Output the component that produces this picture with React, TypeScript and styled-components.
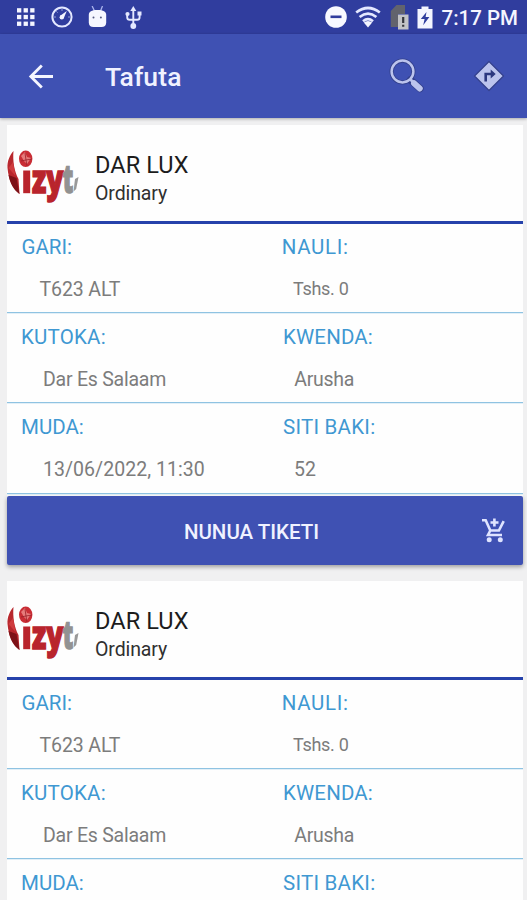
import React from "react";
import styled, { createGlobalStyle } from "styled-components";

const GlobalStyle = createGlobalStyle`
  * { box-sizing: border-box; }
  body { margin: 0; background: #f0f0f1; font-family: Roboto, sans-serif; overflow: hidden; }
  svg { display: block; flex: none; }
`;

const Screen = styled.div`
  width: 527px;
  height: 900px;
  overflow: hidden;
  background: #f0f0f1;
`;

const StatusBar = styled.header`
  height: 34px;
  display: flex;
  align-items: center;
  justify-content: space-between;
  padding: 0 9px 0 16px;
  background: #303d9e;
`;

const StatusGroup = styled.div<{ $gap: number }>`
  display: flex;
  align-items: center;
  gap: ${(p) => p.$gap}px;
`;

const Clock = styled.span`
  color: #f4f5ff;
  font-size: 20.5px;
  font-weight: 500;
  line-height: 26px;
  white-space: nowrap;
  padding-top: 2px;
`;

const AppBar = styled.nav`
  height: 84px;
  display: flex;
  align-items: center;
  padding: 0 22px 0 27px;
  background: #3f51b3;
  box-shadow: 0 1px 3px rgba(0, 0, 0, 0.3);
`;

const Title = styled.h1`
  margin: 2px auto 0 51px;
  color: #f0f2ff;
  font-size: 26.5px;
  font-weight: 500;
  line-height: 32px;
  letter-spacing: 0.1px;
`;

const IconButton = styled.button<{ $gap?: number }>`
  padding: 0;
  border: 0;
  background: none;
  margin-left: ${(p) => p.$gap ?? 0}px;
`;

const List = styled.main`
  display: flex;
  flex-direction: column;
  gap: 16px;
  padding: 7px 4px 0 7px;
`;

const Card = styled.article`
  height: 440px;
  background: #fefefe;
`;

const CardHeader = styled.div`
  height: 99px;
  display: flex;
  align-items: flex-start;
  padding-top: 22px;
  border-bottom: 3px solid #2642ab;
`;

const Heading = styled.div`
  margin: 3px 0 0 16px;
`;

const Company = styled.div`
  color: #1c1c1c;
  font-size: 23.5px;
  line-height: 30px;
  letter-spacing: 0.1px;
`;

const ServiceClass = styled.div`
  color: #303030;
  font-size: 19.5px;
  line-height: 28px;
  letter-spacing: -0.1px;
`;

const Row = styled.div<{ $height: number; $top: number }>`
  height: ${(p) => p.$height}px;
  padding-top: ${(p) => p.$top}px;
  display: grid;
  grid-template-columns: 260px 1fr;
  align-items: start;
  border-bottom: 1px solid #8fc3e2;
  box-shadow: 0 1px 0 #e2eff7;
`;

const Label = styled.div<{ $left: number; $spacing: number }>`
  padding-left: ${(p) => p.$left}px;
  color: #3f98d2;
  font-size: 20.5px;
  line-height: 24px;
  letter-spacing: ${(p) => p.$spacing}px;
`;

const Value = styled.div<{ $left: number; $spacing: number; $size?: number }>`
  margin-top: ${(p) => (p.$size ? 18 : 19)}px;
  padding-left: ${(p) => p.$left}px;
  color: #7c7c7c;
  font-size: ${(p) => p.$size ?? 19.5}px;
  line-height: 24px;
  letter-spacing: ${(p) => p.$spacing}px;
`;

const BuyButton = styled.button`
  width: 100%;
  height: 69px;
  margin-top: 2px;
  padding: 0 18px 0 40px;
  display: flex;
  align-items: center;
  border: 0;
  border-radius: 2px;
  background: #3f51b3;
  color: #f0f2ff;
  font: 500 20.5px Roboto, sans-serif;
  box-shadow: 0 2px 4px rgba(0, 0, 0, 0.35);
`;

const BuyText = styled.span`
  flex: 1;
  text-align: center;
  padding-top: 2px;
  padding-right: 26px;
`;

const GridIcon = () => (
  <svg width="19" height="18" viewBox="0 0 19 18" fill="#f4f5ff">
    {[0, 6.7, 13.4].map((y) => [1, 7.6, 14.2].map((x) => <rect key={`${x}-${y}`} x={x} y={y + 0.2} width="4.3" height="4.3" />))}
  </svg>
);

const GaugeIcon = () => (
  <svg width="22" height="22" viewBox="0 0 22 22" fill="none" stroke="#e4e8ff">
    <circle cx="11" cy="11" r="9.6" strokeWidth="2" />
    <path d="M9.2 9.8 15.8 5 12.6 12.4Z" fill="#f4f5ff" stroke="none" />
    <circle cx="10.8" cy="11.3" r="2.2" fill="#f4f5ff" stroke="none" />
    <path d="M11 3.2v1.6M3.2 11h1.6M17.2 11h1.6M5.5 5.5l1 1" strokeWidth="0.7" />
  </svg>
);

const RobotIcon = () => (
  <svg width="19" height="22" viewBox="0 0 18 22">
    <path d="M3.6 0 6 5M14 0 12 5" stroke="#aab4ec" strokeWidth="1.3" />
    <path d="M.3 9C.3 5.5 3 4 9 4s8.7 1.5 8.7 5v7.5c0 3-1.8 4.500-4.700 4.500H5C2.100 21 .3 19.500.3 16.500Z" fill="#f6f7ff" />
    <circle cx="5" cy="11.5" r="1" fill="#555b82" />
    <circle cx="12.4" cy="11.5" r="1" fill="#555b82" />
  </svg>
);

const UsbIcon = () => (
  <svg width="20" height="23" viewBox="-2 0 20 23" fill="#e4e8ff">
    <path d="M8.3 4v15M2.200 8v3.200q0 2.600 2.500 2.600h7.500q2.400 0 2.400-2.600V8" fill="none" stroke="#e4e8ff" strokeWidth="1.9" />
    <path d="M8.3 0 11.3 5H5.3Z" />
    <circle cx="2.5" cy="8" r="2.1" />
    <rect x="12.5" y="5.5" width="4" height="4" />
    <circle cx="8.3" cy="20" r="2.9" />
  </svg>
);

const DoNotDisturbIcon = () => (
  <svg width="22" height="22" viewBox="0 0 22 22">
    <circle cx="11" cy="11" r="10.8" fill="#f8f9ff" />
    <rect x="5.5" y="9.5" width="11" height="2.6" fill="#303d9e" />
  </svg>
);

const WifiIcon = () => (
  <svg width="26" height="22" viewBox="0 0 26 22" fill="none" stroke="#e4e8ff" strokeWidth="2.7">
    <path d="M1.2 6.5q11.8-9 23.6 0M4.6 11q8.4-6.600 16.800 0M8 15.200q5-4 10 0" />
    <path d="M13 21.5 8.8 16.5q4.200-3.200 8.400 0Z" fill="#f4f5ff" stroke="none" />
  </svg>
);

const SimIcon = () => (
  <svg width="19" height="26" viewBox="0 0 19 26">
    <path d="M.8 7 6.5 1H15v9H8v13H.8Z" fill="#62636d" />
    <rect x="8" y="10.5" width="10.5" height="15" fill="#c3c3c6" />
    <path d="M13.2 13v6M13.2 20.8v2" stroke="#35363c" strokeWidth="2.2" />
  </svg>
);

const BatteryIcon = () => (
  <svg width="16" height="23" viewBox="0 0 16 23">
    <path d="M4.5.5h7V3h4v19.5H.5V3h4Z" fill="#f4f5ff" />
    <path d="M9.5 6 3.8 13h3.800l-1.400 6.200L12.400 11H8.600Z" fill="#303d9e" />
  </svg>
);

const BackIcon = () => (
  <svg width="27" height="25" viewBox="0 0 27 25" fill="none" stroke="#f4f5ff" strokeWidth="2.8">
    <path d="M26 12.5H4M14.8 1.5l-11 11 11 11" />
  </svg>
);

const SearchIcon = () => (
  <svg width="36" height="36" viewBox="0 0 36 36" fill="none">
    <circle cx="13.5" cy="13.5" r="10.9" stroke="#33408c" strokeWidth="4.2" />
    <path d="m21.5 22 9.5 8.5" stroke="#33408c" strokeWidth="7.4" strokeLinecap="round" />
    <circle cx="13.5" cy="13.5" r="10.9" stroke="#bcc4ed" strokeWidth="2.5" />
    <path d="m21 21 3 3" stroke="#bcc4ed" strokeWidth="2.8" />
    <path d="m25 25.2 5.8 5.3" stroke="#bcc4ed" strokeWidth="5.9" strokeLinecap="round" />
  </svg>
);

const DirectionsIcon = () => (
  <svg width="32" height="32" viewBox="0 0 32 32">
    <path d="M16 1.5 30.5 16 16 30.5 1.5 16Z" fill="#bcc4ed" stroke="#33408c" strokeWidth="1.2" strokeLinejoin="round" />
    <path d="M12.7 21.5v-7.500h6" fill="none" stroke="#2c387f" strokeWidth="2.6" />
    <path d="m17.7 9.6 5 4.400-5 4.400Z" fill="#2c387f" />
  </svg>
);

const CartIcon = () => (
  <svg width="23" height="25" viewBox="0 0 23 25" fill="none" stroke="#dfe4ff">
    <path d="M0 2.2h3.700l4.600 10.300h8.600L21.700 3.200M8.300 12.500 6 17h14" strokeWidth="2.6" />
    <path d="M12.4.5v8M8.500 4.500h8" strokeWidth="2.6" />
    <circle cx="7.2" cy="21.8" r="2.5" fill="#dfe4ff" stroke="none" />
    <circle cx="18.3" cy="21.8" r="2.5" fill="#dfe4ff" stroke="none" />
  </svg>
);

const LogoText = styled.text`
  font-family: "Open Sans", sans-serif;
  font-weight: 800;
  font-size: 39px;
  stroke-width: 1.6;
`;

const OperatorLogo = () => (
  <svg width="72" height="60" viewBox="0 0 72 60">
    <path d="M6.5 4C3 8 0 14 .5 21 1.5 32 5 41 12.500 47L11.500 32C7.500 25 5.500 14 6.500 4Z" fill="#b8272d" />
    <path d="m1.5 28 8 3 3 16C6.500 43 3 36 1.500 28Z" fill="#7d1218" />
    <path d="m1.5 21 4.500-6 2.500 14Z" fill="#cf3b3e" />
    <ellipse cx="18.7" cy="11.8" rx="6.7" ry="8.3" fill="#c92d35" />
    <path d="m14 9 4-4 2 5 4 1-4 6-3-3Z" fill="#e67b7b" />
    <path d="m18 6 1 7 6-1M14 14l5-1 1 6" stroke="#992028" strokeWidth=".8" fill="none" />
    <path d="M16.2 23.5h7V46.200h-7Z" fill="#b9242c" />
    <LogoText x="25" y="45.5">
      <tspan fill="#b9242c" stroke="#b9242c" textLength="31.5" lengthAdjust="spacingAndGlyphs">zy</tspan>
      <tspan x="55.7" fill="#929292" stroke="#929292" textLength="10.5" lengthAdjust="spacingAndGlyphs">t</tspan>
    </LogoText>
    <path d="m71.5 30-3.500 2-1.500 12.500 2.700-2.500Z" fill="#999" />
  </svg>
);

type Field = { label: string; value: string; labelLeft: number; valueLeft: number; ls: number; vs: number; size?: number };

const rows: { height: number; top: number; fields: Field[] }[] = [
  {
    height: 89, top: 11,
    fields: [
      { label: "GARI:", value: "T623 ALT", labelLeft: 14.5, valueLeft: 32.5, ls: 0, vs: -0.1 },
      { label: "NAULI:", value: "Tshs. 0", labelLeft: 14.7, valueLeft: 26, ls: 0.7, vs: -0.3, size: 18 },
    ],
  },
  {
    height: 90, top: 12,
    fields: [
      { label: "KUTOKA:", value: "Dar Es Salaam", labelLeft: 14, valueLeft: 36, ls: 0.2, vs: -0.23 },
      { label: "KWENDA:", value: "Arusha", labelLeft: 16, valueLeft: 27.3, ls: 0.15, vs: -0.3 },
    ],
  },
  {
    height: 91, top: 12,
    fields: [
      { label: "MUDA:", value: "13/06/2022, 11:30", labelLeft: 14, valueLeft: 36, ls: 0, vs: 0.04 },
      { label: "SITI BAKI:", value: "52", labelLeft: 16, valueLeft: 27, ls: 0.25, vs: 0 },
    ],
  },
];

const TicketCard = () => (
  <Card>
    <CardHeader>
      <OperatorLogo />
      <Heading>
        <Company>DAR LUX</Company>
        <ServiceClass>Ordinary</ServiceClass>
      </Heading>
    </CardHeader>
    {rows.map((row) => (
      <Row key={row.fields[0].label} $height={row.height} $top={row.top}>
        {row.fields.map((f) => (
          <div key={f.label}>
            <Label $left={f.labelLeft} $spacing={f.ls}>{f.label}</Label>
            <Value $left={f.valueLeft} $spacing={f.vs} $size={f.size}>{f.value}</Value>
          </div>
        ))}
      </Row>
    ))}
    <BuyButton>
      <BuyText>NUNUA TIKETI</BuyText>
      <CartIcon />
    </BuyButton>
  </Card>
);

export default function App() {
  return (
    <Screen>
      <GlobalStyle />
      <StatusBar>
        <StatusGroup $gap={15.5}>
          <GridIcon />
          <GaugeIcon />
          <RobotIcon />
          <UsbIcon />
        </StatusGroup>
        <StatusGroup $gap={8.5}>
          <DoNotDisturbIcon />
          <WifiIcon />
          <SimIcon />
          <BatteryIcon />
          <Clock>7:17 PM</Clock>
        </StatusGroup>
      </StatusBar>
      <AppBar>
        <IconButton aria-label="Back"><BackIcon /></IconButton>
        <Title>Tafuta</Title>
        <IconButton aria-label="Search"><SearchIcon /></IconButton>
        <IconButton aria-label="Directions" $gap={48}><DirectionsIcon /></IconButton>
      </AppBar>
      <List>
        <TicketCard />
        <TicketCard />
      </List>
    </Screen>
  );
}
